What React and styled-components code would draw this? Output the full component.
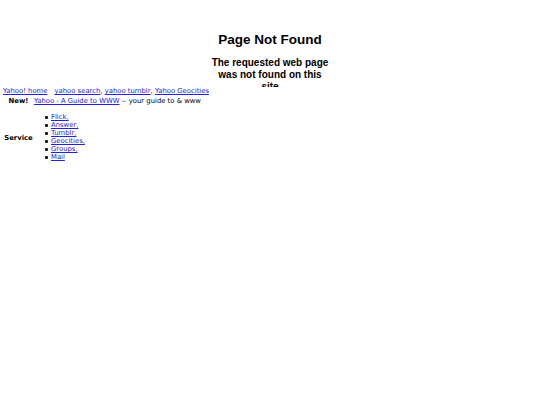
import React from "react";
import styled, { createGlobalStyle } from "styled-components";

const GlobalStyle = createGlobalStyle`
  html, body { margin: 0; padding: 0; background: #ffffff; }
  body { font-family: "DejaVu Sans", Verdana, sans-serif; color: #000; }
`;

const Page = styled.div`
  padding: 0 3px;
  font-size: 6.85px;
  line-height: 9.5px;
`;

const Header = styled.header`
  display: flex;
  flex-direction: column;
  align-items: center;
  padding-top: 32px;
  font-family: "Liberation Sans", Arial, sans-serif;
  font-weight: bold;
`;

const Title = styled.h1`
  margin: 0 0 8.5px;
  font-size: 13.5px;
  line-height: 16px;
`;

const Subtitle = styled.h2`
  margin: 0;
  width: 122px;
  height: 30.5px;
  overflow: hidden;
  text-align: center;
  font-size: 10px;
  line-height: 12px;
`;

const Link = styled.a`
  color: #2323d4;
  text-decoration: underline;
`;

const NavRow = styled.nav`
  display: flex;
  align-items: baseline;
  gap: 7px;
`;

const Directory = styled.div`
  display: grid;
  grid-template-columns: 31px auto;
  align-items: center;
  justify-content: start;
`;

const Label = styled.strong`
  text-align: center;
  font-weight: bold;
  padding-top: ${(p) => p.$drop || 0}px;
`;

const ServiceList = styled.ul`
  margin: 7px 0 8px;
  padding-left: 17px;
  line-height: 8px;
  list-style: none;
`;

const ServiceItem = styled.li`
  position: relative;
  &::before {
    content: "";
    position: absolute;
    left: -6px;
    top: 3px;
    width: 2.5px;
    height: 2.5px;
    border-radius: 50%;
    background: #000;
  }
`;

const services = ["Flick,", "Answer,", "Tumblr,", "Geocities,", "Groups,", "Mail"];

export default function App() {
  return (
    <>
      <GlobalStyle />
      <Page>
        <Header>
          <Title>Page Not Found</Title>
          <Subtitle>The requested web page was not found on this site</Subtitle>
        </Header>
        <NavRow>
          <Link href="#">Yahoo! home</Link>
          <span>
            <Link href="#">yahoo search</Link>, <Link href="#">yahoo tumblr</Link>,{" "}
            <Link href="#">Yahoo Geocities</Link>
          </span>
        </NavRow>
        <Directory>
          <Label>New!</Label>
          <div>
            <Link href="#">Yahoo - A Guide to WWW</Link> -- your guide to &amp; www
          </div>
          <Label $drop={2}>Service</Label>
          <div>
            <ServiceList>
              {services.map((s) => (
                <ServiceItem key={s}>
                  <Link href="#">{s}</Link>
                </ServiceItem>
              ))}
            </ServiceList>
          </div>
        </Directory>
      </Page>
    </>
  );
}
